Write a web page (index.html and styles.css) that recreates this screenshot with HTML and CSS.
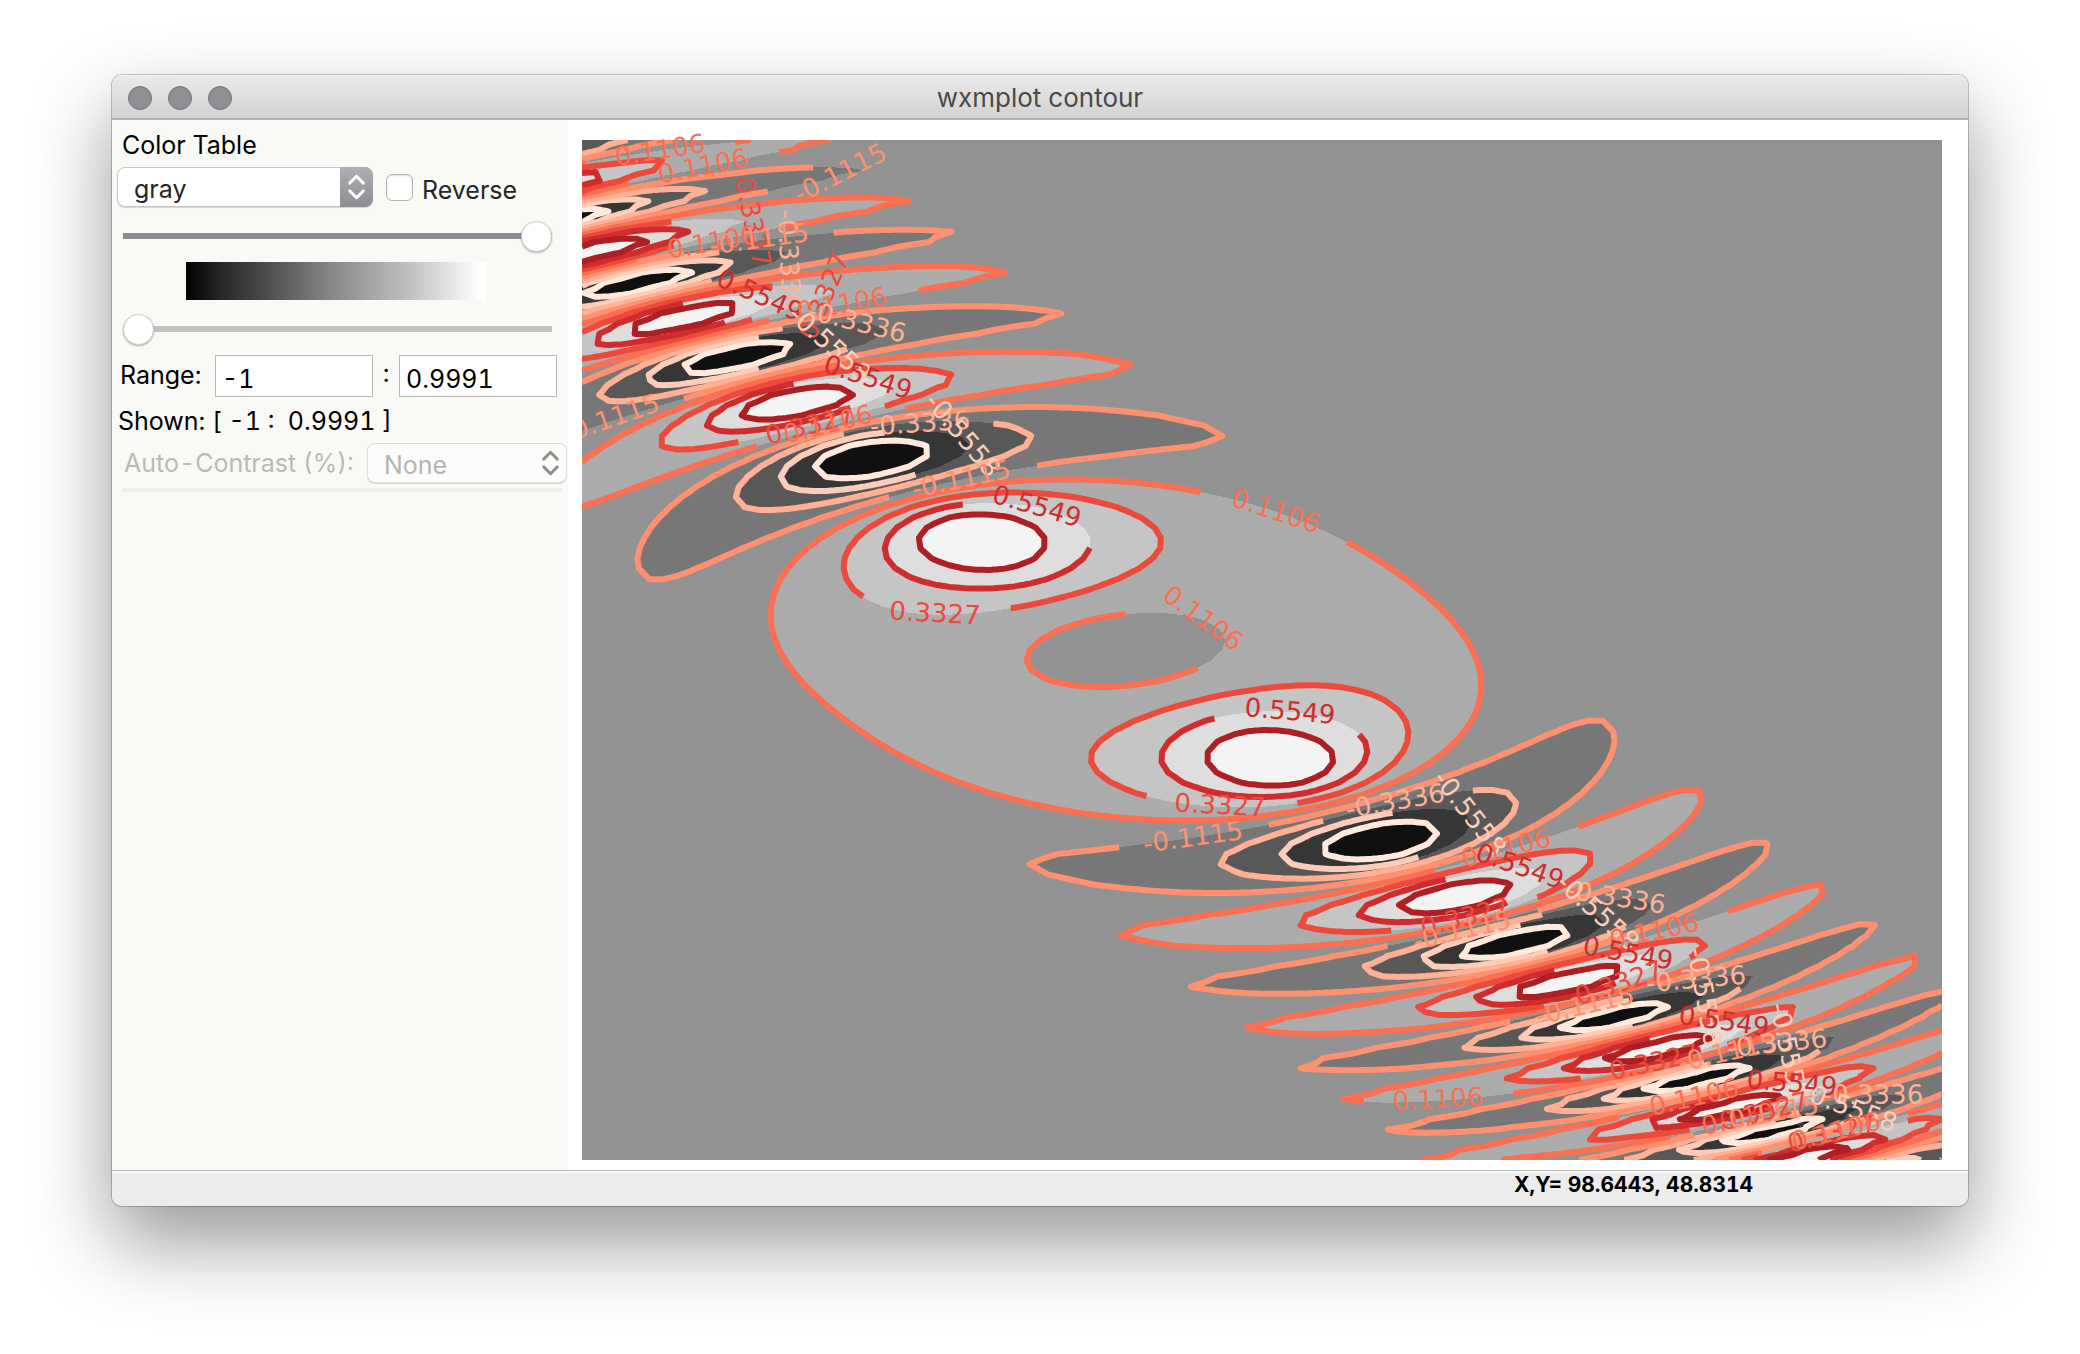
FILE: index.html
```html
<!DOCTYPE html>
<html lang="en">
<head>
<meta charset="utf-8">
<title>wxmplot contour</title>
<link rel="stylesheet" href="styles.css">
</head>
<body>
<div class="window">
  <header class="titlebar">
    <div class="lights">
      <button class="light" type="button" aria-label="Close"></button>
      <button class="light" type="button" aria-label="Minimize"></button>
      <button class="light" type="button" aria-label="Zoom"></button>
    </div>
    <h1 class="title">wxmplot contour</h1>
  </header>

  <main class="content">
    <form class="panel">
      <label class="heading" for="cmap">Color Table</label>
      <div class="row cmap-row">
        <div class="picker">
          <select id="cmap" class="select"><option>gray</option></select>
          <svg class="arrows" viewBox="0 0 34 40" aria-hidden="true"><path d="M10 16l7-7 7 7M10 24l7 7 7-7"/></svg>
        </div>
        <input id="reverse" class="check" type="checkbox">
        <label for="reverse">Reverse</label>
      </div>
      <input class="slider slider-high" type="range" min="0" max="100" value="100" aria-label="High value">
      <div class="colorbar"></div>
      <input class="slider" type="range" min="0" max="100" value="0" aria-label="Low value">
      <div class="row range-row">
        <label class="range-label" for="lo">Range:</label>
        <input id="lo" class="field" type="text" value="-1">
        <label class="colon" for="hi">:</label>
        <input id="hi" class="field" type="text" value="0.9991">
      </div>
      <p class="shown">Shown: [ -1 :&nbsp; 0.9991 ]</p>
      <div class="row contrast-row">
        <label class="dim" for="contrast">Auto-Contrast (%):</label>
        <div class="picker picker-off">
          <select id="contrast" class="select" disabled><option>None</option></select>
          <svg class="arrows" viewBox="0 0 34 40" aria-hidden="true"><path d="M10 16l7-7 7 7M10 24l7 7 7-7"/></svg>
        </div>
      </div>
      <hr class="rule">
    </form>

    <section class="figure">
      <svg id="plot" class="plot" viewBox="0 0 1360 1020" role="img" aria-label="Contour plot">
        <defs>
          <clipPath id="axes"><rect width="1360" height="1020"/></clipPath>
          <clipPath id="canvas"><rect y="-20" width="1380" height="1050"/></clipPath>
        </defs>
        <g id="bands" shape-rendering="crispEdges"></g>
        <g id="lines" clip-path="url(#axes)"></g>
        <g id="labels" clip-path="url(#canvas)"></g>
      </svg>
    </section>
  </main>

  <footer class="status"><output class="cursor">X,Y= 98.6443, 48.8314</output></footer>
</div>
<script src="plot.js"></script>
</body>
</html>
```

FILE: styles.css
```css
* { box-sizing: border-box; }

body {
  margin: 0;
  padding: 75px 112px 148px;
  background: #fff;
  color: #000;
  font: 25px/30px Inter, "Liberation Sans", sans-serif;
  font-variant-numeric: tabular-nums;
}

.window {
  overflow: hidden;
  border-radius: 10px;
  background: #fff;
  box-shadow: 0 0 0 1px rgba(0, 0, 0, .22), 0 36px 80px rgba(0, 0, 0, .41);
}

.titlebar {
  display: grid;
  grid-template-columns: 1fr auto 1fr;
  align-items: center;
  height: 45px;
  padding: 3px 16px 0;
  border-bottom: 2px solid #b1b1b1;
  background: linear-gradient(#ebebeb, #d2d2d2);
  box-shadow: inset 0 1px #f6f6f6;
}
.lights { display: flex; gap: 16px; }
.light {
  width: 24px;
  height: 24px;
  padding: 0;
  border: 1px solid #727276;
  border-radius: 50%;
  background: #8e8e93;
}
.title { margin: 0; color: #4a4a4a; font-size: 26px; font-weight: 400; }

.content { display: grid; grid-template-columns: 456px 1fr; }

.panel { padding: 10px 0 0 5px; background: #f9faf5; }
.row { display: flex; align-items: center; }
.heading { display: block; margin-left: 5px; }
.cmap-row { height: 40px; margin-top: 7px; }

.picker { position: relative; width: 256px; height: 40px; }
.select {
  appearance: none;
  width: 100%;
  height: 100%;
  padding: 3px 16px 0;
  border: 1px solid #c4c4c0;
  border-radius: 8px;
  background: #fff;
  box-shadow: 0 1px 1px rgba(0, 0, 0, .15);
  color: #262626;
  font: inherit;
}
.arrows {
  position: absolute;
  top: 0;
  right: 0;
  width: 33px;
  height: 40px;
  border-radius: 0 8px 8px 0;
  background: linear-gradient(#b0b0b4, #8c8c91);
  fill: none;
  stroke: #fff;
  stroke-width: 3;
  stroke-linecap: round;
  stroke-linejoin: round;
  pointer-events: none;
}
.picker-off { width: 200px; }
.picker-off .select { border-color: #dededa; background: #fcfcfa; color: #b5b5b2; opacity: 1; }
.picker-off .arrows { background: none; stroke: #8e8e8c; }

.check {
  appearance: none;
  width: 27px;
  height: 27px;
  margin: 0 9px 0 13px;
  border: 1px solid #b4b4b1;
  border-radius: 6px;
  background: #fff;
  box-shadow: inset 0 1px 2px rgba(0, 0, 0, .12);
}
.check + label { padding-top: 5px; color: #262626; }

.slider {
  appearance: none;
  display: block;
  width: 429px;
  height: 32px;
  margin: 13px 0 0 6px;
  border-radius: 3px;
  background: linear-gradient(#c2c2be, #c2c2be) center / 100% 6px no-repeat;
}
.slider-high { background-image: linear-gradient(#8c8c90, #8c8c90); }
.slider::-webkit-slider-thumb {
  appearance: none;
  width: 31px;
  height: 31px;
  border: 1px solid #d0d0cd;
  border-radius: 50%;
  background: #fff;
  box-shadow: 0 1px 2px rgba(0, 0, 0, .3);
}
.colorbar {
  width: 300px;
  height: 38px;
  margin: 10px 0 0 69px;
  background: linear-gradient(90deg, #000, #282828 12%, #484848 25%, #8b8b8b 50%, #c2c2c2 75%, #fff 98%);
}

.range-row { height: 42px; margin: 10px 0 0 3px; }
.range-label { width: 95px; padding-bottom: 2px; }
.field {
  width: 158px;
  height: 42px;
  padding: 5px 6px 0;
  border: 1px solid #b7b7b4;
  background: #fff;
  color: #000;
  font: inherit;
  font-variant-numeric: inherit;
}
.colon { width: 26px; padding-bottom: 6px; text-align: center; }
.shown { margin: 9px 0 0 1px; white-space: pre; }
.contrast-row { height: 40px; margin-top: 7px; }
.dim { width: 243px; padding-left: 7px; flex: none; color: #b9bab6; white-space: nowrap; }
.contrast-row .picker { margin-left: 7px; }
.rule { width: 440px; height: 4px; margin: 5px 0 0 5px; border: 0; background: #efefea; }

.figure { padding: 20px 26px 10px 14px; }
.plot {
  display: block;
  width: 100%;
  aspect-ratio: 4 / 3;
  overflow: visible;
  background: #929292;
}
.plot path { fill: none; stroke-width: 6; stroke-linejoin: round; }
#bands path { stroke: none; }
.plot text {
  font: 26px "DejaVu Sans", sans-serif;
  text-anchor: middle;
  dominant-baseline: central;
}

.status {
  display: grid;
  grid-template-columns: 75% 25%;
  align-items: center;
  height: 36px;
  padding-bottom: 7px;
  border-top: 1px solid #b8b8b8;
  background: linear-gradient(#fff, #ececec 3px);
}
.cursor { grid-column: 2; padding-left: 10px; font-size: 21px; font-weight: 700; line-height: 24px; white-space: nowrap; }
```

FILE: plot.js
```js
const N = 101, W = 1360, H = 1020;
const DX = W / (N - 1), DY = H / (N - 1);
const GAP = 148;

const LEVELS = [-0.7779, -0.5558, -0.3336, -0.1115, 0.1106, 0.3327, 0.5549, 0.777];
const STROKES = ['#ffe8dc', '#fecdb9', '#ffb095', '#ff9171', '#fb6f52', '#ec4a3b', '#cf2c2e', '#ad1f23'];
const FILLS = ['#101010', '#363636', '#585858', '#777777', '#929292', '#acacac', '#c5c5c5', '#dedede', '#f4f4f4'];

// level, centre x, centre y, rotation in degrees
const LABELS = [
  [0.1106, 78, 10, -9], [0.1106, 121, 26, -11], [-0.1115, 258, 33, -27],
  [0.3327, 171, 82, 78], [-0.3336, 207, 120, 87], [0.1106, 130, 102, -10],
  [-0.1115, 177, 99, -8], [0.5549, 178, 155, 24], [0.3327, 242, 156, -67],
  [0.1106, 260, 164, -10], [-0.3336, 275, 182, 14], [-0.5558, 248, 204, 42],
  [-0.1115, 29, 278, -19], [0.5549, 286, 237, 18], [0.3327, 228, 285, -14],
  [0.1106, 246, 284, -14], [-0.3336, 338, 283, -4], [-0.5558, 381, 295, 50],
  [-0.1115, 379, 339, -12], [0.5549, 455, 366, 16], [0.1106, 694, 371, 18],
  [0.1106, 621, 478, 36], [0.3327, 353, 473, 3], [0.5549, 708, 571, 5],
  [0.3327, 638, 665, 3], [-0.1115, 611, 697, -8], [-0.3336, 813, 661, -10],
  [-0.5558, 888, 673, 52], [0.1106, 924, 708, -14], [0.5549, 938, 726, 19],
  [0.3327, 883, 777, -14], [-0.1115, 880, 790, -13], [-0.3336, 1034, 757, 9],
  [-0.5558, 1016, 772, 42], [0.1106, 1072, 791, -12], [0.5549, 1046, 813, 10],
  [-0.5558, 1123, 857, 80], [-0.3336, 1114, 839, -5], [0.3327, 1037, 843, -18],
  [-0.1115, 1003, 865, -13], [0.3327, 1072, 922, -12], [0.5549, 1142, 881, 8],
  [-0.1115, 1145, 912, -13], [-0.3336, 1195, 903, -6], [-0.5558, 1207, 912, 78],
  [0.1106, 1112, 957, -13], [0.5549, 1210, 943, 5], [-0.3336, 1291, 955, 0],
  [-0.5558, 1267, 967, 20], [0.3327, 1250, 993, -14], [0.1106, 1254, 991, -14],
  [0.1106, 1164, 977, -12], [0.3327, 1182, 971, -14], [-0.1115, 1187, 973, -10],
  [0.1106, 856, 959, -3]
];

// rows run from the top of the axes (y = 5) to the bottom (y = -5)
const data = [];
for (let j = 0; j < N; j++) {
  const y = 5 - j / 10, row = [];
  for (let i = 0; i < N; i++) {
    const x = -4 + i / 10;
    row.push(Math.sin(x * x / 3 + y * y) / (1 + (x + y) * (x + y)));
  }
  data.push(row);
}

const NS = 'http://www.w3.org/2000/svg';
function add(parent, name, attrs) {
  const el = document.createElementNS(NS, name);
  for (const key in attrs) el.setAttribute(key, attrs[key]);
  document.getElementById(parent).appendChild(el);
  return el;
}
const pt = p => p[0].toFixed(1) + ' ' + p[1].toFixed(1);

function cellCorners(i, j) {
  return [[i, j], [i + 1, j], [i + 1, j + 1], [i, j + 1]];
}
function cross(a, b, level) {
  const va = data[a[1]][a[0]], vb = data[b[1]][b[0]], t = (level - va) / (vb - va);
  return [(a[0] + t * (b[0] - a[0])) * DX, (a[1] + t * (b[1] - a[1])) * DY];
}

function bandPath(level) {
  let d = '';
  for (let j = 0; j < N - 1; j++) {
    for (let i = 0; i < N - 1; i++) {
      const c = cellCorners(i, j), poly = [];
      for (let k = 0; k < 4; k++) {
        const a = c[k], b = c[(k + 1) % 4];
        const ina = data[a[1]][a[0]] >= level, inb = data[b[1]][b[0]] >= level;
        if (ina) poly.push([a[0] * DX, a[1] * DY]);
        if (ina !== inb) poly.push(cross(a, b, level));
      }
      if (poly.length) d += 'M' + poly.map(pt).join('L') + 'Z';
    }
  }
  return d;
}

function contourLines(level) {
  const nodes = new Map();
  function node(a, b) {
    const key = [a, b].map(p => p[1] * N + p[0]).sort((m, n) => m - n).join('-');
    if (!nodes.has(key)) nodes.set(key, { p: cross(a, b, level), next: [], seen: false });
    return nodes.get(key);
  }
  for (let j = 0; j < N - 1; j++) {
    for (let i = 0; i < N - 1; i++) {
      const c = cellCorners(i, j), hits = [];
      for (let k = 0; k < 4; k++) {
        const a = c[k], b = c[(k + 1) % 4];
        if ((data[a[1]][a[0]] >= level) !== (data[b[1]][b[0]] >= level)) hits.push(node(a, b));
      }
      if (hits.length === 4) {
        const mean = c.reduce((s, p) => s + data[p[1]][p[0]], 0) / 4;
        if ((mean >= level) !== (data[j][i] >= level)) hits.unshift(hits.pop());
      }
      for (let k = 0; k < hits.length; k += 2) {
        hits[k].next.push(hits[k + 1]);
        hits[k + 1].next.push(hits[k]);
      }
    }
  }
  const lines = [];
  function trace(start, closed) {
    const pts = [];
    for (let n = start; n; n = n.next.find(m => !m.seen)) {
      n.seen = true;
      pts.push(n.p);
    }
    if (closed) pts.push(start.p);
    lines.push({ pts: subdivide(pts), closed });
  }
  for (const n of nodes.values()) if (!n.seen && n.next.length === 1) trace(n, false);
  for (const n of nodes.values()) if (!n.seen) trace(n, true);
  return lines;
}

function subdivide(pts) {
  const out = [pts[0]];
  for (let k = 1; k < pts.length; k++) {
    const [x0, y0] = pts[k - 1], [x1, y1] = pts[k];
    const n = Math.max(1, Math.ceil(Math.hypot(x1 - x0, y1 - y0) / 4));
    for (let m = 1; m <= n; m++) out.push([x0 + (x1 - x0) * m / n, y0 + (y1 - y0) * m / n]);
  }
  return out;
}

// opens the contour nearest to the label, half a gap to each side
function openGap(lines, x, y) {
  let best = Infinity, line, at;
  for (const l of lines) {
    l.pts.forEach((p, k) => {
      const dist = Math.hypot(p[0] - x, p[1] - y);
      if (dist < best) { best = dist; line = l; at = k; }
    });
  }
  line.cut = line.cut || new Set();
  const n = line.pts.length;
  for (const step of [1, -1]) {
    let k = at, length = 0;
    while (length < GAP / 2) {
      line.cut.add(k);
      let m = k + step;
      if (m < 0 || m >= n) {
        if (!line.closed) break;
        m = (m + n) % n;
      }
      length += Math.hypot(line.pts[m][0] - line.pts[k][0], line.pts[m][1] - line.pts[k][1]);
      k = m;
      if (line.cut.size >= n) break;
    }
  }
}

function linePath(line) {
  if (!line.cut) return 'M' + line.pts.map(pt).join('L') + (line.closed ? 'Z' : '');
  const n = line.pts.length, runs = [];
  const first = line.closed ? [...line.cut][0] : 0;
  let run = [];
  for (let k = 0; k < n; k++) {
    const m = (first + k) % n;
    if (line.cut.has(m)) {
      if (run.length > 1) runs.push(run);
      run = [];
    } else run.push(line.pts[m]);
  }
  if (run.length > 1) runs.push(run);
  return runs.map(r => 'M' + r.map(pt).join('L')).join('');
}

add('bands', 'rect', { width: W, height: H, fill: FILLS[0] });
LEVELS.forEach((level, k) => {
  add('bands', 'path', { d: bandPath(level), style: 'fill:' + FILLS[k + 1] });
  const lines = contourLines(level);
  for (const [value, x, y] of LABELS) if (value === level) openGap(lines, x, y);
  add('lines', 'path', { d: lines.map(linePath).join(''), stroke: STROKES[k] });
});
for (const [value, x, y, angle] of LABELS) {
  const label = add('labels', 'text', {
    transform: `translate(${x} ${y}) rotate(${angle})`,
    fill: STROKES[LEVELS.indexOf(value)]
  });
  label.textContent = value.toFixed(4);
}
```
